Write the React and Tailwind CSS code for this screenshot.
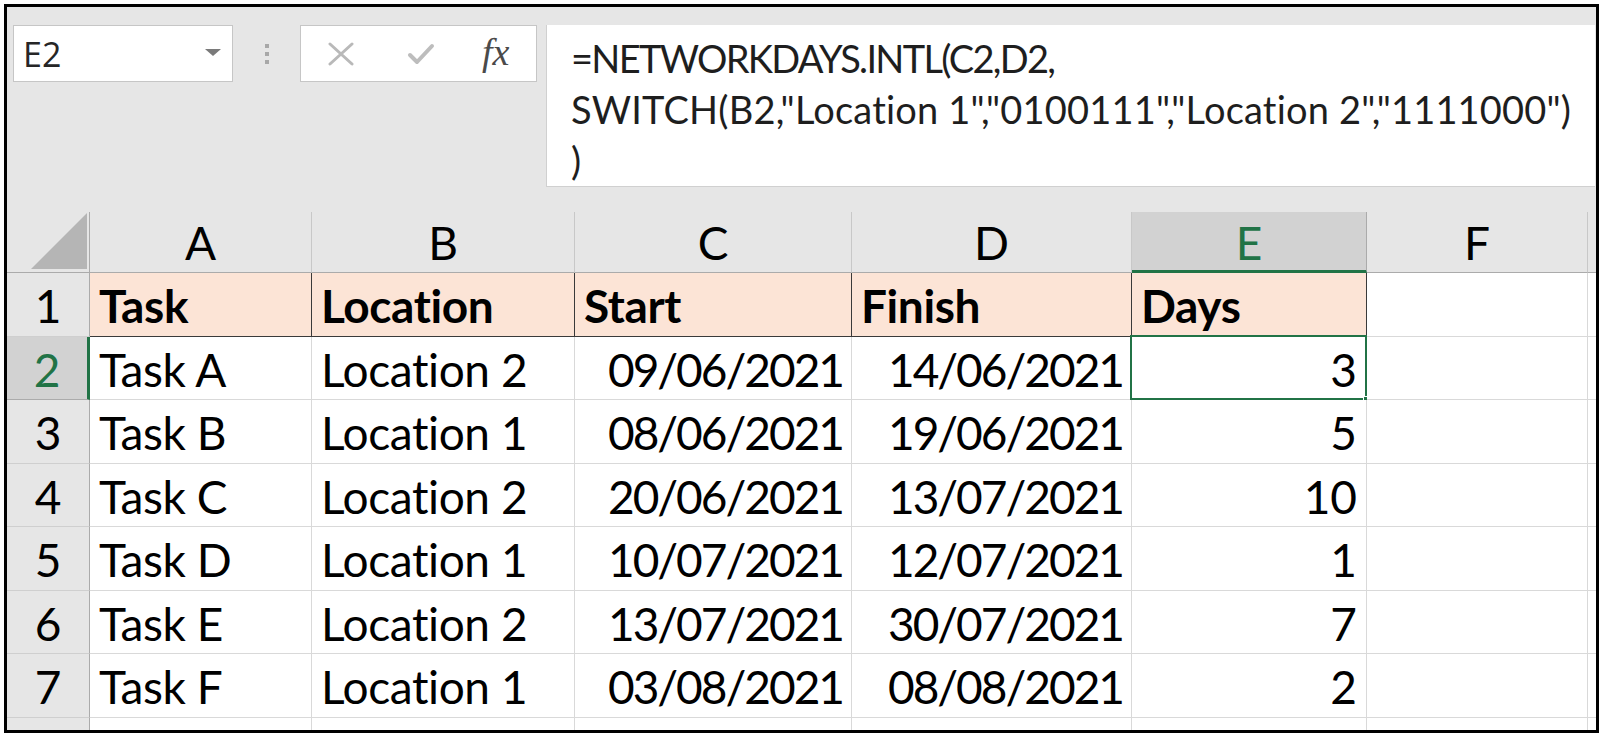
import React from "react";

const colClasses = ["w-[222px]", "w-[263px]", "w-[277px]", "w-[280px]", "w-[235px]", "w-[221px]"];
const rowH = ["h-[64px]", "h-[63px]", "h-[64px]", "h-[63px]", "h-[64px]", "h-[63px]", "h-[64px]"];

const data = [
  ["Task", "Location", "Start", "Finish", "Days", ""],
  ["Task A", "Location 2", "09/06/2021", "14/06/2021", "3", ""],
  ["Task B", "Location 1", "08/06/2021", "19/06/2021", "5", ""],
  ["Task C", "Location 2", "20/06/2021", "13/07/2021", "10", ""],
  ["Task D", "Location 1", "10/07/2021", "12/07/2021", "1", ""],
  ["Task E", "Location 2", "13/07/2021", "30/07/2021", "7", ""],
  ["Task F", "Location 1", "03/08/2021", "08/08/2021", "2", ""],
];

function Cell({ r, c, text }) {
  const header = r === 0 && c < 5;
  const isDate = r > 0 && (c === 2 || c === 3);
  const isNum = r > 0 && c === 4;
  const selected = r === 1 && c === 4;
  const base = `${colClasses[c]} shrink-0 relative flex pt-[10px] leading-none`;
  const border = header
    ? "border-r border-b border-[#3a3a3a] bg-[#fce4d6]"
    : "border-r border-b border-[#d9d9d9] bg-white";
  let align = "justify-start pl-[9px] tracking-[-0.4px]";
  if (isDate) align = "justify-end pr-[8px] tracking-[-2px]";
  if (isNum) align = "justify-end pr-[9px]";
  return (
    <div className={`${base} ${border} ${align}`}>
      <span className={header ? "font-bold" : "font-normal"}>{text}</span>
      {selected && (
        <>
          <div className="absolute -left-[2px] -top-[2px] -right-[1px] -bottom-[1px] border-[2.5px] border-[#217346]" />
          <div className="absolute -right-[5px] -bottom-[5px] w-[8px] h-[8px] bg-[#217346] border border-white" />
        </>
      )}
    </div>
  );
}

export default function App() {
  return (
    <div className="w-[1605px] h-[739px] bg-white pt-[4px] pl-[4px] overflow-hidden font-[family-name:Lato,'Liberation_Sans',sans-serif] text-black">
      <div className="w-[1595px] h-[729px] border-[3px] border-black bg-[#e6e6e6] flex flex-col overflow-hidden">
        {/* Top bar */}
        <div className="h-[205px] shrink-0 flex items-start pt-[18px] pl-[6px]">
          {/* Name box */}
          <div className="w-[220px] h-[57px] bg-white border border-[#c6c6c6] flex items-center justify-between pl-[9px] pr-[10px]">
            <span className="font-[family-name:'Open_Sans','Noto_Sans',sans-serif] text-[34px] leading-none text-[#262626] mt-[1px]">E2</span>
            <svg width="18" height="9" viewBox="0 0 18 9" className="mb-[2px]">
              <polygon points="1,1 17,1 9,8" fill="#7a7a7a" />
            </svg>
          </div>
          {/* dots */}
          <div className="w-[67px] h-[57px] flex flex-col items-center justify-center gap-[4px]">
            <div className="w-[4px] h-[4px] bg-[#a8a8a8]" />
            <div className="w-[4px] h-[4px] bg-[#a8a8a8]" />
            <div className="w-[4px] h-[4px] bg-[#a8a8a8]" />
          </div>
          {/* function buttons */}
          <div className="w-[237px] h-[57px] bg-white border border-[#c6c6c6] flex items-center pl-[26px]">
            <svg width="28" height="24" viewBox="0 0 28 24">
              <path d="M3 2 L25 22 M25 2 L3 22" stroke="#b9b9b9" strokeWidth="3" strokeLinecap="round" />
            </svg>
            <svg width="28" height="24" viewBox="0 0 28 24" className="ml-[52px]">
              <path d="M3 13 L10 20 L25 4" stroke="#bdbdbd" strokeWidth="4" fill="none" strokeLinecap="round" strokeLinejoin="round" />
            </svg>
            <span className="ml-[47px] font-[family-name:'Liberation_Serif',serif] italic text-[38px] leading-none text-[#4a4a4a] -mt-[4px]">fx</span>
          </div>
          {/* formula box */}
          <div className="ml-[9px] w-[1049px] h-[162px] bg-white border-l border-b border-[#d0d0d0] pl-[24px] pt-[8px] font-[family-name:Lato,'Liberation_Sans',sans-serif] text-[38px] leading-[51px] text-[#1e1e1e] whitespace-nowrap">
            <div className="tracking-[-1.7px]">=NETWORKDAYS.INTL(C2,D2,</div>
            <div className="tracking-[0.2px]">SWITCH(B2,"Location 1","0100111","Location 2","1111000")</div>
            <div>)</div>
          </div>
        </div>

        {/* Column headers */}
        <div className="h-[61px] shrink-0 flex text-[46px] leading-none">
          <div className="w-[83px] shrink-0 relative border-r border-b border-[#ababab]">
            <svg width="56" height="56" viewBox="0 0 56 56" className="absolute right-[2px] bottom-[3px]">
              <polygon points="56,0 56,56 0,56" fill="#b5b5b5" />
            </svg>
          </div>
          {["A", "B", "C", "D", "E", "F"].map((l, i) => (
            <div
              key={l}
              className={`${colClasses[i]} shrink-0 flex justify-center pt-[8px] ${
                i === 4
                  ? "bg-[#d2d2d2] text-[#217346] border-r border-[#ababab] border-b-[3px] border-b-[#217346]"
                  : "border-r border-[#c8c8c8] border-b border-b-[#ababab]"
              }`}
            >
              {l}
            </div>
          ))}
          <div className="flex-1 border-b border-[#ababab]" />
        </div>

        {/* Rows */}
        {data.map((row, r) => (
          <div key={r} className={`${rowH[r]} shrink-0 flex text-[46px]`}>
            <div
              className={`w-[83px] shrink-0 flex justify-center pt-[10px] leading-none ${
                r === 1
                  ? "bg-[#d2d2d2] text-[#217346] border-r-[3px] border-r-[#217346] border-b border-b-[#ababab]"
                  : "bg-[#e6e6e6] border-r border-r-[#ababab] border-b border-b-[#cfcfcf]"
              }`}
            >
              {r + 1}
            </div>
            {row.map((t, c) => (
              <Cell key={c} r={r} c={c} text={t} />
            ))}
            <div className="flex-1 bg-white border-b border-[#d9d9d9]" />
          </div>
        ))}
        {/* partial last row */}
        <div className="flex-1 flex">
          <div className="w-[83px] shrink-0 bg-[#e6e6e6] border-r border-[#ababab]" />
          {colClasses.map((cls, i) => (
            <div key={i} className={`${cls} shrink-0 bg-white border-r border-[#d9d9d9]`} />
          ))}
          <div className="flex-1 bg-white" />
        </div>
      </div>
    </div>
  );
}
